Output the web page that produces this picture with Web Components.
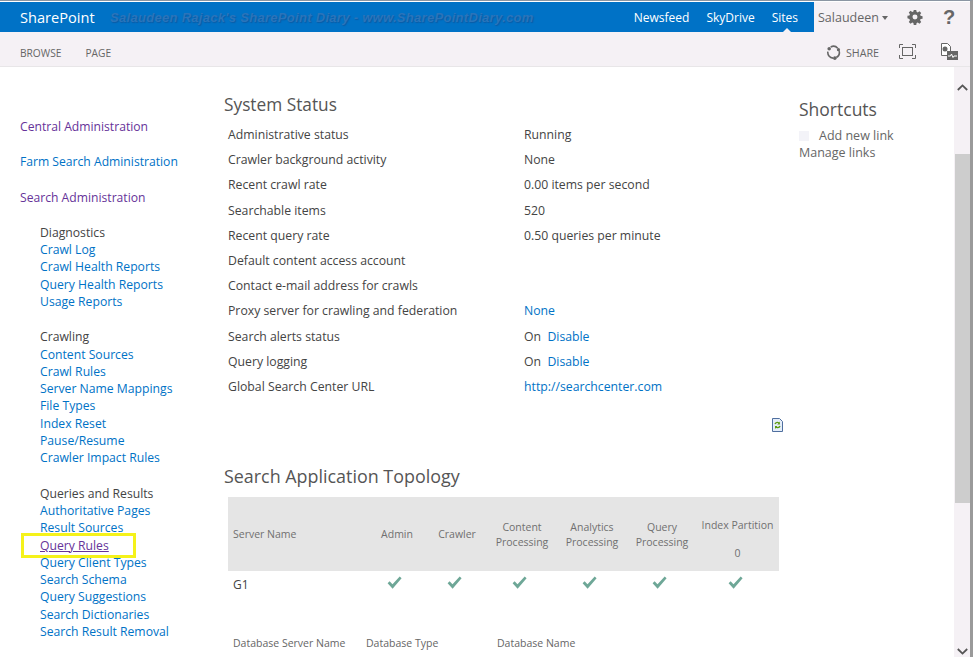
<!DOCTYPE html>
<html>
<head>
<meta charset="utf-8">
<title>Search Administration</title>
<style>
  html, body { margin: 0; height: 100%; overflow: hidden; background: #fff; }
  body { font-family: "Open Sans", "Noto Sans", sans-serif; }
</style>
</head>
<body>
<sp-page>
  <sp-suite-bar slot="top"></sp-suite-bar>
  <sp-ribbon slot="top"></sp-ribbon>
  <sp-quick-nav slot="left"></sp-quick-nav>
  <sp-main slot="main"></sp-main>
  <sp-shortcuts slot="right"></sp-shortcuts>
  <sp-scrollbar slot="scroll"></sp-scrollbar>
</sp-page>

<script>
(function() {

  // Shared font for every shadow root; the reference uses Segoe UI
  const FONT = `font-family: "Open Sans", "Noto Sans", sans-serif;`;

  /**
   * Small helper so each element only states its markup.
   */
  function define(name, html) {
    customElements.define(name, class extends HTMLElement {
      constructor() {
        super();
        this.attachShadow({mode: 'open'}).innerHTML = html;
      }
    });
  }

  const CHECK = `<svg class="ok" width="15" height="13" viewBox="0 0 15 13"><path d="M.6 7.200 2.600 5.300 5.500 8.200 12.700.4 14.600 2.200 5.600 12.800Z" fill="#6ea797"/></svg>`;

  define('sp-page', `
    <style>
      :host { display: flex; flex-direction: column; width: 973px; height: 657px; overflow: hidden;
        box-sizing: border-box; padding-top: 1px; border-top: 1px solid #8b96a3; border-right: 3px solid #9a9a9a; background: #fff; }
      .top { display: block; flex: none; }
      .body { flex: 1; display: flex; min-height: 0; }
      .left { display: block; width: 224px; flex: none; }
      .main { display: block; width: 575px; flex: none; }
      .right { display: block; flex: 1; }
      .scroll { display: block; flex: none; }
    </style>
    <div class="top"><slot name="top"></slot></div>
    <div class="body">
      <div class="left"><slot name="left"></slot></div>
      <div class="main"><slot name="main"></slot></div>
      <div class="right"><slot name="right"></slot></div>
      <div class="scroll"><slot name="scroll"></slot></div>
    </div>
  `);

  define('sp-suite-bar', `
    <style>
      :host { display: flex; height: 30px; background: #f5f1f5; ${FONT} font-size: 12px; }
      .blue { flex: 1; display: flex; align-items: center; background: #0072c6; color: #fff; padding-left: 20px; position: relative; }
      .brand { font-size: 14.600px; width: 90px; }
      .mark { font: italic bold 13px "Liberation Sans", sans-serif; color: #2b74ba; letter-spacing: .3px; text-shadow: 1px 1px 1px #0a5ca6; white-space: nowrap; }
      nav { margin-left: auto; display: flex; gap: 17px; margin-right: 16px; }
      .caret { position: absolute; right: 23px; bottom: 0; width: 0; height: 0; border: 4px solid transparent; border-top: 0; border-bottom-color: #f5f1f5; }
      .user { width: 156px; box-sizing: border-box; flex: none; display: flex; align-items: center; padding-left: 4px; color: #666; font-size: 12.500px; }
      .down { width: 0; height: 0; border: 3.500px solid transparent; border-top: 4px solid #666; border-bottom: 0; margin: 2px 0 0 3px; }
      .gear { margin-left: 19px; }
      .help { margin-left: 20px; font: bold 20px "Liberation Sans", sans-serif; color: #666; }
    </style>
    <div class="blue">
      <span class="brand">SharePoint</span>
      <span class="mark">Salaudeen Rajack's SharePoint Diary - www.SharePointDiary.com</span>
      <nav><span>Newsfeed</span><span>SkyDrive</span><span>Sites</span></nav>
      <i class="caret"></i>
    </div>
    <div class="user">
      <span>Salaudeen</span><i class="down"></i>
      <svg class="gear" width="16" height="16" viewBox="-1 -1 18 18"><path fill="#666" fill-rule="evenodd" d="M6.600 0h2.800l.4 2.200 1.300.6 1.900-1.300 2 2-1.300 1.900.6 1.300 2.200.4v2.800l-2.200.4-.6 1.300 1.300 1.900-2 2-1.900-1.300-1.300.6-.4 2.200H6.600l-.4-2.200-1.300-.6-1.900 1.300-2-2 1.300-1.900-.6-1.300L-.5 9.400V6.600l2.200-.4.6-1.300-1.300-1.900 2-2 1.900 1.300 1.300-.6zM8 5.200a2.800 2.800 0 1 0 0 5.600 2.800 2.800 0 0 0 0-5.600z"/></svg>
      <span class="help">?</span>
    </div>
  `);

  define('sp-ribbon', `
    <style>
      :host { display: flex; align-items: center; height: 35px; background: #f5f1f5; border-bottom: 1px solid #e8e6e8;
        ${FONT} font-size: 10.200px; color: #666; padding: 7px 0 0 20px; box-sizing: border-box; }
      .tab { margin-right: 24px; }
      .tools { margin-left: auto; display: flex; align-items: center; margin-right: 12px; }
      .share { margin: 0 20px 0 5px; font-size: 10.700px; }
      svg { display: block; }
    </style>
    <span class="tab">BROWSE</span><span class="tab">PAGE</span>
    <div class="tools">
      <svg width="15" height="15" viewBox="0 0 16 16"><path d="M5 2.200A6 6 0 0 1 12.500 3.500M14 6.500A6 6 0 0 1 11 13.400M7.500 14A6 6 0 0 1 2 7" fill="none" stroke="#666" stroke-width="1.700"/><circle cx="3.400" cy="4" r="1.900" fill="#666"/><circle cx="13.300" cy="5" r="1.700" fill="#666"/><circle cx="9.400" cy="14" r="1.900" fill="#666"/></svg>
      <span class="share">SHARE</span>
      <svg style="margin-top:-2px" width="17" height="15" viewBox="0 0 17 15" fill="none" stroke="#666"><path d="M.5 4V.5H4M13 .5h3.500V4M16.500 11v3.500H13M4 14.500H.5V11"/><rect x="3.500" y="3.500" width="10" height="8"/></svg>
      <svg style="margin:-3px 0 0 24px" width="18" height="17" viewBox="0 0 18 17"><path d="M1.500.5h6l3 3v9h-9z" fill="#fff" stroke="#666"/><circle cx="5" cy="6" r="2.500" fill="#666"/><rect x="7" y="8" width="11" height="9" fill="#666"/><path d="M8 13h2.500l1-2 1.500 3.500 1-1.500H17" fill="none" stroke="#fff"/></svg>
    </div>
  `);

  define('sp-nav-group', `
    <style>
      :host { display: block; margin: 0 0 18.400px 40px; line-height: 17.250px; font-size: 12.200px; color: #444; }
    </style>
    <slot></slot>
  `);

  define('sp-quick-nav', `
    <style>
      :host { display: block; ${FONT} font-size: 12.200px; padding-top: 50.500px; }
      .head { margin: 0 0 18.500px 20px; line-height: 17.200px; font-size: 12.150px; }
      .head.last { margin-bottom: 17.700px; }
      .v { color: #663399; } .b { color: #0072c6; }
      sp-nav-group span { display: block; }
      a { display: block; color: #0072c6; text-decoration: none; white-space: nowrap; }
      .hit { position: relative; color: #663399; text-decoration: underline; width: max-content; }
      .hit::after { content: ""; position: absolute; left: -19px; top: -4px; width: 115px; height: 25px; box-sizing: border-box; border: 3px solid #f5f21a; }
    </style>
    <div class="head v">Central Administration</div>
    <div class="head b">Farm Search Administration</div>
    <div class="head v last">Search Administration</div>
    <sp-nav-group><span>Diagnostics</span><a>Crawl Log</a><a>Crawl Health Reports</a><a>Query Health Reports</a><a>Usage Reports</a></sp-nav-group>
    <sp-nav-group><span>Crawling</span><a>Content Sources</a><a>Crawl Rules</a><a>Server Name Mappings</a><a>File Types</a><a>Index Reset</a><a>Pause/Resume</a><a>Crawler Impact Rules</a></sp-nav-group>
    <sp-nav-group><span>Queries and Results</span><a>Authoritative Pages</a><a>Result Sources</a><a class="hit">Query Rules</a><a>Query Client Types</a><a>Search Schema</a><a>Query Suggestions</a><a>Search Dictionaries</a><a>Search Result Removal</a></sp-nav-group>
  `);

  define('sp-status-row', `
    <style>
      :host { display: grid; grid-template-columns: 296px 1fr; height: 25.200px; align-items: center; padding-left: 4px; }
      ::slotted(*) { white-space: nowrap; }
    </style>
    <slot name="k"></slot><div><slot></slot></div>
  `);

  define('sp-main', `
    <style>
      :host { display: block; ${FONT} font-size: 12.250px; color: #444; padding-top: 26px; }
      h2 { font-weight: 400; font-size: 17.300px; line-height: 24px; margin: 0 0 5px; color: #555; }
      a { color: #0072c6; text-decoration: none; }
      .refresh { display: flex; justify-content: flex-end; margin: 19px 16px 0 0; height: 14px; }
      .topo { margin-top: 32px; }
      .topo h2 { font-size: 17.900px; margin-bottom: 6px; }
      table { border-collapse: collapse; margin: 9px 0 0 4px; width: 551px; table-layout: fixed; }
      th { background: #e5e5e5; font-weight: 400; font-size: 10.500px; line-height: 15px; color: #707070; height: 74px; padding: 2px 0 0; box-sizing: border-box; text-align: center; }
      th:first-child, td:first-child { text-align: left; padding-left: 5px; }
      th:first-child, th.one { padding-top: 0; }
      th.idx { padding-top: 10px; }
      th.idx div { margin-top: 13px; }
      td { height: 27px; padding: 0; text-align: center; font-size: 12px; }
      .ok { margin-right: 5px; }
      .db { display: grid; grid-template-columns: 133px 131px 1fr; margin: 38px 0 0 9px; font-size: 10.500px; color: #666; }
    </style>
    <h2>System Status</h2>
    <sp-status-row><span slot="k">Administrative status</span>Running</sp-status-row>
    <sp-status-row><span slot="k">Crawler background activity</span>None</sp-status-row>
    <sp-status-row><span slot="k">Recent crawl rate</span>0.00 items per second</sp-status-row>
    <sp-status-row><span slot="k">Searchable items</span>520</sp-status-row>
    <sp-status-row><span slot="k">Recent query rate</span>0.50 queries per minute</sp-status-row>
    <sp-status-row><span slot="k">Default content access account</span></sp-status-row>
    <sp-status-row><span slot="k">Contact e-mail address for crawls</span></sp-status-row>
    <sp-status-row><span slot="k">Proxy server for crawling and federation</span><a>None</a></sp-status-row>
    <sp-status-row><span slot="k">Search alerts status</span>On&nbsp; <a>Disable</a></sp-status-row>
    <sp-status-row><span slot="k">Query logging</span>On&nbsp; <a>Disable</a></sp-status-row>
    <sp-status-row><span slot="k">Global Search Center URL</span><a>http://searchcenter.com</a></sp-status-row>
    <div class="refresh">
      <svg width="11" height="14" viewBox="0 0 11 14"><path d="M.5.500h7l3 3v10H.5z" fill="#e4edf9" stroke="#4f6f9f"/><path d="M3 6a2.500 2.500 0 0 1 4.500-.5M8 8a2.500 2.500 0 0 1-4.500.5" fill="none" stroke="#5c9a10" stroke-width="1.300"/><path d="M7.800 3.500v3h-2.500zM3 11V8h2.500z" fill="#5c9a10"/></svg>
    </div>
    <div class="topo">
      <h2>Search Application Topology</h2>
      <table>
        <colgroup><col style="width:140px"><col style="width:58px"><col style="width:62px"><col style="width:68px"><col style="width:72px"><col style="width:68px"><col></colgroup>
        <tr><th>Server Name</th><th class="one">Admin</th><th class="one">Crawler</th><th>Content<br>Processing</th><th>Analytics<br>Processing</th><th>Query<br>Processing</th><th class="idx">Index Partition<div>0</div></th></tr>
        <tr><td>G1</td><td>${CHECK}</td><td>${CHECK}</td><td>${CHECK}</td><td>${CHECK}</td><td>${CHECK}</td><td>${CHECK}</td></tr>
      </table>
      <div class="db"><span>Database Server Name</span><span>Database Type</span><span>Database Name</span></div>
    </div>
  `);

  define('sp-shortcuts', `
    <style>
      :host { display: block; ${FONT} font-size: 12.500px; color: #666; padding-top: 30px; line-height: 17px; }
      h2 { font-weight: 400; font-size: 17.500px; line-height: 24px; margin: 0 0 6px; color: #555; }
      .add { display: flex; align-items: center; }
      .add i { width: 10px; height: 10px; background: #f3f3f8; margin-right: 10px; }
    </style>
    <h2>Shortcuts</h2>
    <div class="add"><i></i>Add new link</div>
    <div>Manage links</div>
  `);

  define('sp-scrollbar', `
    <style>
      :host { display: flex; flex-direction: column; align-items: center; box-sizing: border-box; width: 16px; height: 100%; background: #f5f1f5; }
      svg { flex: none; }
      .up { margin-top: 17px; }
      .thumb { width: 15px; height: 349px; background: #cdcdcd; margin-top: 63px; flex: none; }
      .down { margin-top: auto; margin-bottom: 2px; }
    </style>
    <svg class="up" width="11" height="7" viewBox="0 0 11 7"><path d="M.8 6 5.500 1.400 10.200 6" fill="none" stroke="#555" stroke-width="1.800"/></svg>
    <div class="thumb"></div>
    <svg class="down" width="11" height="7" viewBox="0 0 11 7"><path d="M.8 1 5.500 5.600 10.200 1" fill="none" stroke="#555" stroke-width="1.800"/></svg>
  `);
})();
</script>
</body>
</html>
